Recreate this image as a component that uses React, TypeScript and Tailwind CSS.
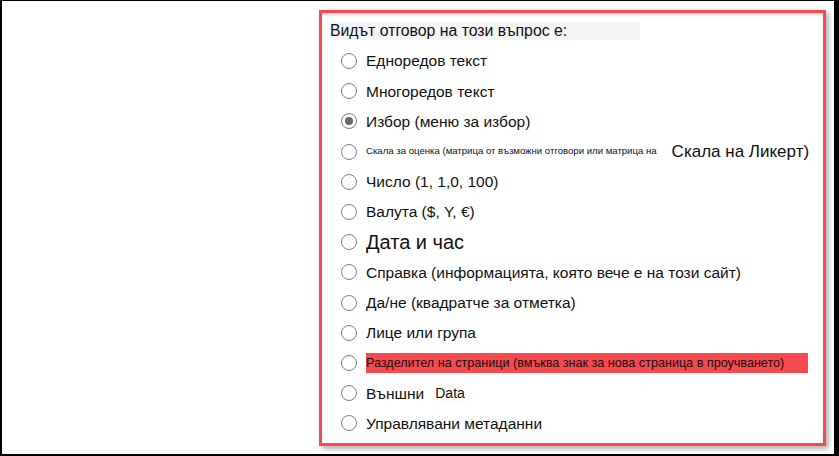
import React from "react";

function Radio({ checked = false }: { checked?: boolean }) {
  return (
    <span className="flex h-[16px] w-[16px] shrink-0 items-center justify-center rounded-full border-[1.5px] border-[#808080] bg-white">
      {checked && <span className="h-[8px] w-[8px] rounded-full bg-[#6b6b6b]" />}
    </span>
  );
}

function Row({ children, checked = false }: { children: React.ReactNode; checked?: boolean }) {
  return (
    <div className="flex h-[30.2px] items-center pl-[11px]">
      <Radio checked={checked} />
      <div className="ml-[9px] flex items-center whitespace-nowrap text-[#111]">{children}</div>
    </div>
  );
}

export default function App() {
  return (
    <div
      className="box-border h-[456px] w-[839px] overflow-hidden border-t-[1px] border-l-[2px] border-b-[2px] border-r-[5px] border-black bg-white"
      style={{ fontFamily: '"Liberation Sans", Arial, sans-serif' }}
    >
      <div className="ml-[317px] mt-[9px] box-border h-[436px] w-[507px] border-[3px] border-[#f4494e] bg-white pl-[8px] pt-[9px] shadow-[3px_3px_5px_rgba(0,0,0,0.3),inset_0_3px_3px_-1px_rgba(0,0,0,0.18)]">
        <div className="flex h-[18px] w-[310px] items-center bg-[#f4f4f4] text-[15.8px] leading-none text-[#111]">
          Видът отговор на този въпрос е:
        </div>
        <div className="mt-[6px] flex flex-col">
          <Row><span className="text-[15.5px]">Едноредов текст</span></Row>
          <Row><span className="text-[15.5px]">Многоредов текст</span></Row>
          <Row checked><span className="text-[15.5px]">Избор (меню за избор)</span></Row>
          <Row>
            <span className="text-[9.6px]">Скала за оценка (матрица от възможни отговори или матрица на</span>
            <span className="ml-[15px] text-[17px]">Скала на Ликерт)</span>
          </Row>
          <Row><span className="text-[15.5px]">Число (1, 1,0, 100)</span></Row>
          <Row><span className="text-[15.5px]">Валута ($, Y, €)</span></Row>
          <Row><span className="text-[20px] font-medium">Дата и час</span></Row>
          <Row><span className="text-[15.5px]">Справка (информацията, която вече е на този сайт)</span></Row>
          <Row><span className="text-[15.5px]">Да/не (квадратче за отметка)</span></Row>
          <Row><span className="text-[15.5px]">Лице или група</span></Row>
          <Row>
            <span className="flex h-[20px] w-[442px] items-center bg-[#f4494e] text-[12.6px]">
              Разделител на страници (вмъква знак за нова страница в проучването)
            </span>
          </Row>
          <Row>
            <span className="text-[15.5px]">Външни</span>
            <span className="ml-[11px] bg-[#fffdf5] text-[14px]">Data</span>
          </Row>
          <Row><span className="text-[15.5px]">Управлявани метаданни</span></Row>
        </div>
      </div>
    </div>
  );
}
